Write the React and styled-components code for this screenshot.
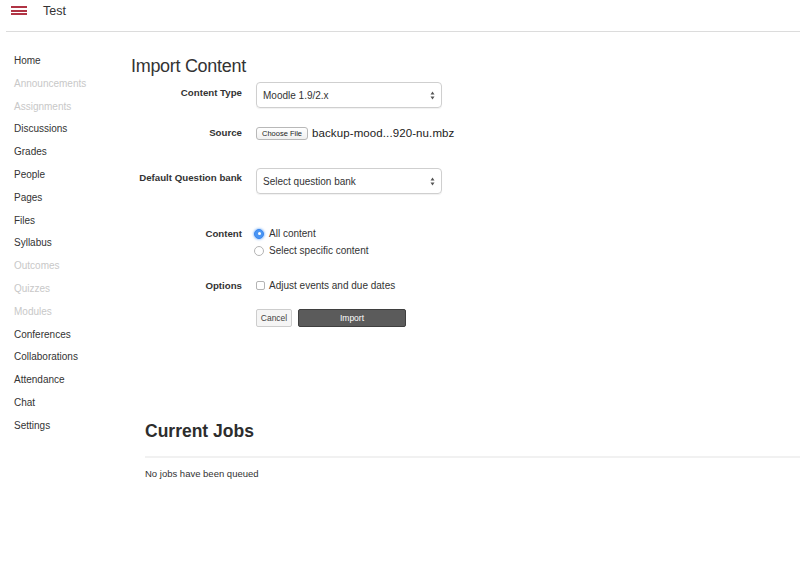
import React from "react";
import styled, { createGlobalStyle } from "styled-components";

const Global = createGlobalStyle`
  html, body { margin: 0; padding: 0; background: #fff; }
  body { font-family: "Liberation Sans", Arial, sans-serif; color: #333; }
  * { box-sizing: border-box; }
`;

const Page = styled.div`
  width: 800px;
  height: 568px;
  overflow: hidden;
  background: #fff;
`;

const Header = styled.header`
  height: 32px;
  margin-left: 6px;
  border-bottom: 1px solid #dcdcdc;
  display: flex;
  align-items: flex-start;
  padding-top: 5px;
  padding-left: 5px;
  gap: 16px;
`;

const Burger = styled.div`
  width: 16px;
  display: flex;
  flex-direction: column;
  gap: 1.5px;
  padding-top: 1px;
`;

const Bar = styled.span`
  display: block;
  height: 2px;
  background: #b03444;
`;

const CourseName = styled.span`
  font-size: 12.5px;
  line-height: 12px;
  color: #333;
`;

const Body = styled.div`
  display: flex;
`;

const Sidebar = styled.nav`
  width: 131px;
  flex: none;
  padding: 18px 0 0 14px;
  display: flex;
  flex-direction: column;
`;

const NavItem = styled.a`
  font-size: 10px;
  line-height: 22.8px;
  height: 22.8px;
  color: ${(p) => (p.$disabled ? "#c8c8c8" : "#333")};
  text-decoration: none;
`;

const Main = styled.main`
  flex: 1;
  padding-top: 23px;
  display: flex;
  flex-direction: column;
`;

const Title = styled.h1`
  margin: 0;
  font-size: 18px;
  font-weight: normal;
  line-height: 22px;
  color: #333;
  letter-spacing: -0.3px;
`;

const Form = styled.form`
  margin-top: 5px;
  display: flex;
  flex-direction: column;
`;

const Row = styled.div`
  display: grid;
  grid-template-columns: 111px 1fr;
  column-gap: 14px;
  align-items: start;
  margin-top: ${(p) => p.$gap || 0}px;
`;

const Label = styled.label`
  text-align: right;
  font-size: 9.7px;
  font-weight: bold;
  line-height: 14px;
  color: #333;
  padding-top: ${(p) => p.$pt || 0}px;
`;

const Select = styled.div`
  width: 186px;
  height: 26px;
  border: 1px solid #cfcfcf;
  border-radius: 4px;
  box-shadow: 0 1px 1px rgba(0, 0, 0, 0.06);
  display: flex;
  align-items: center;
  justify-content: space-between;
  padding: 0 6px 0 6px;
  font-size: 10px;
  color: #333;
`;

const Arrows = styled.svg`
  width: 5px;
  height: 9px;
`;

const FileRow = styled.div`
  display: flex;
  align-items: center;
  height: 14px;
  gap: 4px;
`;

const FileName = styled.span`
  font-size: 11.5px;
  letter-spacing: 0.1px;
  color: #222;
`;

const FileButton = styled.span`
  display: inline-flex;
  align-items: center;
  height: 13px;
  padding: 0 5px;
  border: 1px solid #b8b8b8;
  border-radius: 3px;
  background: linear-gradient(#fff, #f0f0f0);
  font-size: 7.5px;
  color: #222;
`;

const OptionList = styled.div`
  display: flex;
  flex-direction: column;
`;

const Option = styled.div`
  display: flex;
  align-items: center;
  height: 17px;
  gap: 5px;
  font-size: 10px;
  color: #333;
`;

const Radio = styled.span`
  width: 10px;
  height: 10px;
  border-radius: 50%;
  margin-left: -2px;
  flex: none;
  display: flex;
  align-items: center;
  justify-content: center;
  border: 1px solid ${(p) => (p.$checked ? "#3a87ee" : "#b4b4b4")};
  background: ${(p) => (p.$checked ? "#4a95f3" : "#fff")};
  box-shadow: ${(p) => (p.$checked ? "0 0 2px 1px rgba(74,149,243,0.45)" : "none")};
  &::after {
    content: "";
    width: 3px;
    height: 3px;
    border-radius: 50%;
    background: ${(p) => (p.$checked ? "#fff" : "transparent")};
  }
`;

const Checkbox = styled.span`
  width: 9px;
  height: 9px;
  border: 1px solid #b4b4b4;
  border-radius: 2px;
  background: #fff;
  flex: none;
  margin-right: -1px;
`;

const Buttons = styled.div`
  display: flex;
  gap: 6px;
`;

const Button = styled.button`
  height: 18px;
  width: ${(p) => p.$w}px;
  padding: 0;
  font-family: inherit;
  font-size: 8.5px;
  border-radius: 2px;
  border: 1px solid ${(p) => (p.$primary ? "#3f3f3f" : "#cdcdcd")};
  background: ${(p) => (p.$primary ? "#5b5b5b" : "#f5f5f5")};
  color: ${(p) => (p.$primary ? "#fff" : "#444")};
`;

const Jobs = styled.section`
  margin-top: 93px;
  margin-left: 14px;
`;

const JobsTitle = styled.h2`
  margin: 0;
  font-size: 17.5px;
  font-weight: bold;
  line-height: 22px;
  color: #2d2d2d;
  padding-bottom: 14px;
  border-bottom: 2px solid #f1f1f1;
`;

const JobsText = styled.p`
  margin: 10px 0 0;
  font-size: 9.5px;
  line-height: 12px;
  color: #333;
`;

const nav = [
  ["Home"],
  ["Announcements", true],
  ["Assignments", true],
  ["Discussions"],
  ["Grades"],
  ["People"],
  ["Pages"],
  ["Files"],
  ["Syllabus"],
  ["Outcomes", true],
  ["Quizzes", true],
  ["Modules", true],
  ["Conferences"],
  ["Collaborations"],
  ["Attendance"],
  ["Chat"],
  ["Settings"],
];

const UpDown = () => (
  <Arrows viewBox="0 0 5 9">
    <path d="M2.5 0.5 L4.5 3.5 L0.5 3.5 Z M2.5 8.5 L4.5 5.5 L0.5 5.5 Z" fill="#555" />
  </Arrows>
);

export default function App() {
  return (
    <Page>
      <Global />
      <Header>
        <Burger>
          <Bar />
          <Bar />
          <Bar />
        </Burger>
        <CourseName>Test</CourseName>
      </Header>
      <Body>
        <Sidebar>
          {nav.map(([n, d]) => (
            <NavItem key={n} $disabled={d}>
              {n}
            </NavItem>
          ))}
        </Sidebar>
        <Main>
          <Title>Import Content</Title>
          <Form>
            <Row>
              <Label $pt={4}>Content Type</Label>
              <Select>
                <span>Moodle 1.9/2.x</span>
                <UpDown />
              </Select>
            </Row>
            <Row $gap={18}>
              <Label>Source</Label>
              <FileRow>
                <FileButton>Choose File</FileButton>
                <FileName>backup-mood...920-nu.mbz</FileName>
              </FileRow>
            </Row>
            <Row $gap={28}>
              <Label $pt={3}>Default Question bank</Label>
              <Select>
                <span>Select question bank</span>
                <UpDown />
              </Select>
            </Row>
            <Row $gap={31}>
              <Label $pt={2}>Content</Label>
              <OptionList>
                <Option>
                  <Radio $checked />
                  All content
                </Option>
                <Option>
                  <Radio />
                  Select specific content
                </Option>
              </OptionList>
            </Row>
            <Row $gap={18}>
              <Label $pt={2}>Options</Label>
              <Option>
                <Checkbox />
                Adjust events and due dates
              </Option>
            </Row>
            <Row $gap={15}>
              <span />
              <Buttons>
                <Button type="button" $w={36}>Cancel</Button>
                <Button type="button" $w={108} $primary>Import</Button>
              </Buttons>
            </Row>
          </Form>
          <Jobs>
            <JobsTitle>Current Jobs</JobsTitle>
            <JobsText>No jobs have been queued</JobsText>
          </Jobs>
        </Main>
      </Body>
    </Page>
  );
}
